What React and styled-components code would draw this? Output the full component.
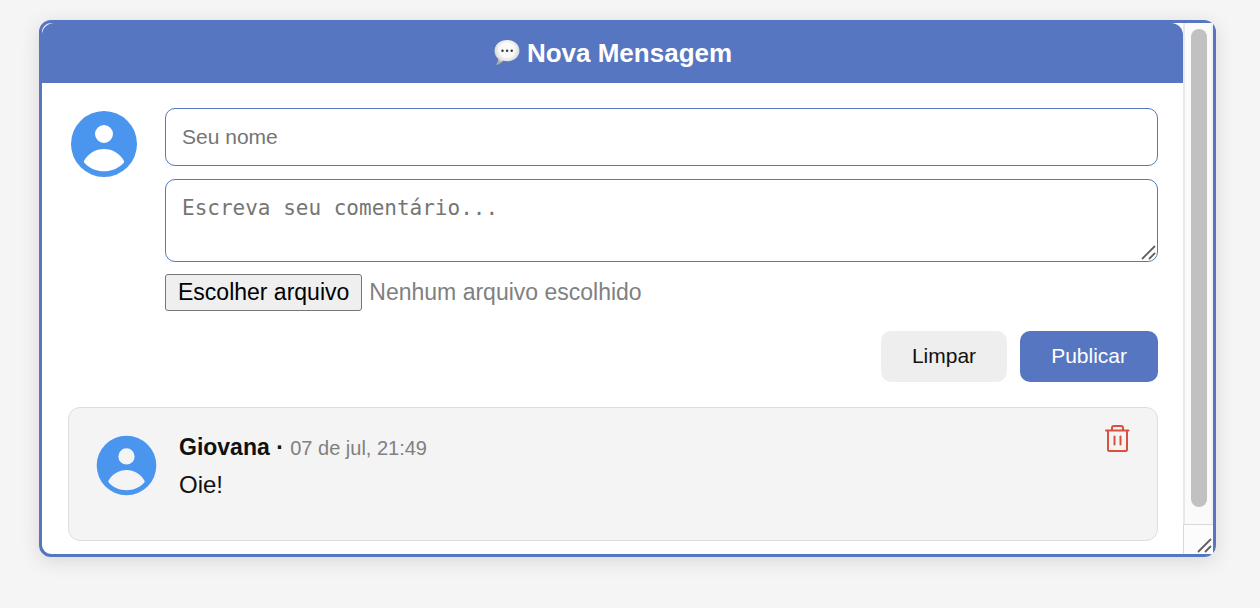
import React, { useState } from "react";
import styled, { createGlobalStyle } from "styled-components";

const blue = "#5676c1";

const GlobalStyle = createGlobalStyle`
  *, *::before, *::after { box-sizing: border-box; }
  body {
    margin: 0;
    background: #f5f5f5;
    color: #111;
    font-family: "Liberation Sans", Arial, Helvetica, sans-serif;
  }
`;

const Page = styled.main`
  padding: 20px 44px 51px 39px;
`;

const Panel = styled.section`
  display: flex;
  background: #fff;
  border: 3px solid ${blue};
  border-radius: 12px;
  box-shadow: 0 4px 20px rgba(0, 0, 0, 0.12);
`;

const Content = styled.div`
  flex: 1;
  min-width: 0;
`;

const Header = styled.header`
  display: flex;
  align-items: center;
  justify-content: center;
  gap: 7px;
  height: 60px;
  background: ${blue};
  border-radius: 12px 12px 0 0;
  color: #fff;
`;

const Title = styled.h1`
  margin: 0;
  font-size: 26px;
  line-height: 30px;
  font-weight: 700;
`;

const Body = styled.div`
  padding: 25px 25px 13px 26px;
`;

const Form = styled.form`
  display: flex;
  align-items: flex-start;
  gap: 25px;
  margin-bottom: 25px;
`;

const Fields = styled.div`
  flex: 1;
  min-width: 0;
`;

const AvatarIcon = styled.svg`
  display: block;
  flex: none;
  width: ${(p) => p.$size}px;
  height: ${(p) => p.$size}px;
  fill: #4a95ee;
`;

const NameInput = styled.input`
  display: block;
  width: 100%;
  height: 58px;
  margin-bottom: 13px;
  padding: 0 16px;
  border: 1px solid ${blue};
  border-radius: 10px;
  background: #fff;
  font: 21px "Liberation Sans", Arial, sans-serif;
  &::placeholder { color: #757575; }
`;

const CommentBox = styled.div`
  position: relative;
  margin-bottom: 12px;
`;

const CommentInput = styled.textarea`
  display: block;
  width: 100%;
  height: 83px;
  padding: 16px;
  border: 1px solid ${blue};
  border-radius: 10px;
  background: #fff;
  resize: none;
  font: 21px/25px "DejaVu Sans Mono", monospace;
  &::placeholder { color: #757575; }
`;

const Grip = styled.svg`
  position: absolute;
  right: 2px;
  bottom: 2px;
  width: 15px;
  height: 15px;
  stroke: #606060;
  stroke-width: 1.8;
  fill: none;
`;

const FileRow = styled.div`
  display: flex;
  align-items: center;
  gap: 7px;
  margin-bottom: 20px;
  font-size: 23px;
  line-height: 35px;
`;

const FileInput = styled.input`
  position: absolute;
  width: 1px;
  height: 1px;
  opacity: 0;
`;

const FileLabel = styled.label`
  padding: 0 12px;
  border: 1px solid #767676;
  border-radius: 3px;
  background: #efefef;
  color: #000;
`;

const FileName = styled.span`
  color: #808080;
`;

const Actions = styled.div`
  display: flex;
  justify-content: flex-end;
  gap: 13px;
`;

const Button = styled.button`
  height: 51px;
  padding: 0 31px 2px;
  border: 0;
  border-radius: 10px;
  background: ${(p) => (p.$primary ? blue : "#eee")};
  color: ${(p) => (p.$primary ? "#fff" : "#111")};
  font: 21px "Liberation Sans", Arial, sans-serif;
  cursor: pointer;
`;

const Message = styled.article`
  display: flex;
  align-items: flex-start;
  gap: 20px;
  min-height: 134px;
  padding: 17px 25px 25px;
  border: 1px solid #ddd;
  border-radius: 12px;
  background: #f4f4f4;
`;

const MessageAvatar = styled.div`
  padding-top: 8px;
`;

const MessageText = styled.div`
  flex: 1;
  padding-top: 7px;
`;

const Meta = styled.div`
  font-size: 23px;
  line-height: 30px;
`;

const When = styled.time`
  color: #808080;
  font-size: 20px;
`;

const Comment = styled.p`
  margin: 8px 0 0;
  font-size: 24px;
  line-height: 28px;
`;

const DeleteButton = styled.button`
  display: block;
  padding: 0;
  border: 0;
  background: none;
  cursor: pointer;
  svg {
    display: block;
    width: 28px;
    height: 28px;
    fill: none;
    stroke: #d9503f;
    stroke-width: 2;
    stroke-linecap: round;
    stroke-linejoin: round;
  }
`;

const Rail = styled.div`
  display: flex;
  flex-direction: column;
  flex: none;
  width: 30px;
`;

const Track = styled.div`
  flex: 1;
  display: flex;
  padding: 6px 4px 17px 6px;
  border: solid #e8e8e8;
  border-width: 0 2px 0 2px;
  border-right-color: #f1f1f1;
  background: #fafafa;
`;

const Thumb = styled.div`
  flex: 1;
  border-radius: 8px;
  background: #c1c1c1;
`;

const Corner = styled.div`
  position: relative;
  height: 30px;
  border: solid #d9d9d9;
  border-width: 1px 0 0 1px;
  background: #fcfcfc;
  ${Grip} {
    right: 1px;
    bottom: 1px;
  }
`;

function Avatar({ size }) {
  return (
    <AvatarIcon $size={size} viewBox="-3 -3 72 72" aria-hidden="true">
      <path
        fillRule="evenodd"
        d="M33 0a33 33 0 1 1 0 66a33 33 0 1 1 0-66ZM33 14a9 9 0 1 0 0 18a9 9 0 1 0 0-18ZM13 50C17 42.500 24.500 38 33 38S49 42.500 53 50Q53.500 51 52.500 52C47.500 57.500 40.500 60.300 33 60.300S18.500 57.500 13.500 52Q12.500 51 13 50Z"
      />
    </AvatarIcon>
  );
}

function ResizeGrip() {
  return (
    <Grip viewBox="0 0 15 15" aria-hidden="true">
      <path d="M1 14L14 1M8 14L14 8" />
    </Grip>
  );
}

function SpeechBalloon() {
  return (
    <svg width="27" height="28" viewBox="0 0 27 28" aria-hidden="true">
      <defs>
        <radialGradient id="balloon" cx="50%" cy="40%" r="58%">
          <stop offset="0.5" stopColor="#fafafa" />
          <stop offset="0.8" stopColor="#dedede" />
          <stop offset="1" stopColor="#a8a8a8" />
        </radialGradient>
      </defs>
      <path
        fill="url(#balloon)"
        d="M14 1C21 1 26.500 5.500 26.500 11.700S21 22.200 14 22.200C12.500 22.200 11.200 22 10 21.700C8.300 23.800 6 25.500 3.500 25.800C2.800 25.800 2.800 25.300 3.300 24.900C4.500 23.700 5.300 21.700 5.200 19.800C2.800 17.700 1.500 15 1.500 11.700C1.500 5.500 7 1 14 1Z"
      />
      <g fill="#333">
        <circle cx="9.500" cy="11.700" r="1.200" />
        <circle cx="14.100" cy="11.700" r="1.200" />
        <circle cx="18.700" cy="11.700" r="1.200" />
      </g>
    </svg>
  );
}

export default function App() {
  const [fileName, setFileName] = useState("");
  return (
    <>
      <GlobalStyle />
      <Page>
        <Panel>
          <Content>
            <Header>
              <SpeechBalloon />
              <Title>Nova Mensagem</Title>
            </Header>
            <Body>
              <Form
                onSubmit={(e) => e.preventDefault()}
                onReset={() => setFileName("")}
              >
                <Avatar size={72} />
                <Fields>
                  <NameInput type="text" placeholder="Seu nome" aria-label="Seu nome" />
                  <CommentBox>
                    <CommentInput
                      placeholder="Escreva seu comentário..."
                      aria-label="Escreva seu comentário"
                    />
                    <ResizeGrip />
                  </CommentBox>
                  <FileRow>
                    <FileInput
                      id="arquivo"
                      type="file"
                      onChange={(e) => setFileName(e.target.files[0]?.name ?? "")}
                    />
                    <FileLabel htmlFor="arquivo">Escolher arquivo</FileLabel>
                    <FileName>{fileName || "Nenhum arquivo escolhido"}</FileName>
                  </FileRow>
                  <Actions>
                    <Button type="reset">Limpar</Button>
                    <Button type="submit" $primary>Publicar</Button>
                  </Actions>
                </Fields>
              </Form>
              <Message>
                <MessageAvatar>
                  <Avatar size={65} />
                </MessageAvatar>
                <MessageText>
                  <Meta>
                    <strong>Giovana ·</strong> <When>07 de jul, 21:49</When>
                  </Meta>
                  <Comment>Oie!</Comment>
                </MessageText>
                <DeleteButton type="button" aria-label="Excluir">
                  <svg viewBox="0 0 28 28" aria-hidden="true">
                    <path d="M2 5.500H24.500M8 5V3Q8 1 10 1H17Q19 1 19 3V5M4 6V24.500Q4 26 5.500 26H21.500Q23 26 23 24.500V6M10.500 11.500V19.500M16.500 11.500V19.500" />
                  </svg>
                </DeleteButton>
              </Message>
            </Body>
          </Content>
          <Rail aria-hidden="true">
            <Track>
              <Thumb />
            </Track>
            <Corner>
              <ResizeGrip />
            </Corner>
          </Rail>
        </Panel>
      </Page>
    </>
  );
}
